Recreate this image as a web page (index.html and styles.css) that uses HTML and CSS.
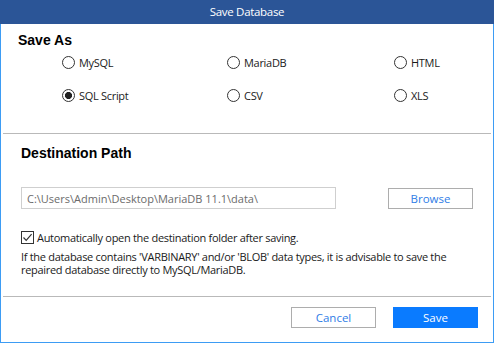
FILE: index.html
```html
<!DOCTYPE html>
<html lang="en">

<head>
    <meta charset="UTF-8">
    <meta name="viewport" content="width=device-width, initial-scale=1.0">
    <title>Save Database</title>
    <link rel="stylesheet" href="styles.css">
</head>

<body>
    <div class="window">
        <div class="titlebar">Save Database</div>
        <div class="content">
            <div class="section">
                <h2 class="heading">Save As</h2>
                <div class="options">
                    <label class="option"><input type="radio" name="format" value="mysql"> MySQL</label>
                    <label class="option"><input type="radio" name="format" value="mariadb"> MariaDB</label>
                    <label class="option"><input type="radio" name="format" value="html"> HTML</label>
                    <label class="option"><input type="radio" name="format" value="sql" checked> SQL Script</label>
                    <label class="option"><input type="radio" name="format" value="csv"> CSV</label>
                    <label class="option"><input type="radio" name="format" value="xls"> XLS</label>
                </div>
            </div>

            <hr class="divider divider-top">

            <div class="section destination">
                <h2 class="heading heading-dest">Destination Path</h2>
                <div class="path-row">
                    <input type="text" class="path" value="C:\Users\Admin\Desktop\MariaDB 11.1\data\" readonly>
                    <button class="btn">Browse</button>
                </div>
                <label class="check-row">
                    <span class="check">
                        <svg width="11" height="11" viewBox="0 0 11 11">
                            <path d="M1.5 5.5 L4.2 8.4 L9.6 2.2" fill="none" stroke="#333" stroke-width="1.2"/>
                        </svg>
                    </span>
                    Automatically open the destination folder after saving.
                </label>
                <p class="note">If the database contains 'VARBINARY' and/or 'BLOB' data types, it is advisable to save the repaired database directly to MySQL/MariaDB.</p>
            </div>

            <hr class="divider divider-bottom">

            <div class="footer">
                <button class="btn">Cancel</button>
                <button class="btn primary">Save</button>
            </div>
        </div>
    </div>
</body>

</html>
```

FILE: styles.css
```css
/* styles.css */

body {
    margin: 0;
    font-family: "Open Sans", "Noto Sans", sans-serif;
    font-size: 11px;
    letter-spacing: -0.3px;
    color: #1a1a1a;
}

.window {
    width: 494px;
    height: 343px;
    display: flex;
    flex-direction: column;
    box-sizing: border-box;
}

.titlebar {
    height: 24px;
    line-height: 24px;
    background-color: #2b5597;
    color: #fff;
    text-align: center;
    font-size: 11.5px;
}

.content {
    flex: 1;
    border: 1px solid #3d9cf4;
    border-top: none;
    display: flex;
    flex-direction: column;
}

.section {
    padding: 8px 0 0 17px;
}

.heading {
    margin: 0;
    font-family: "Liberation Sans", Arial, sans-serif;
    font-size: 14px;
    font-weight: bold;
    line-height: 16px;
    letter-spacing: 0;
    color: #000;
}

.options {
    display: grid;
    grid-template-columns: 165px 167px auto;
    row-gap: 17px;
    margin: 6px 0 0 44px;
}

.option {
    display: flex;
    align-items: center;
    gap: 4px;
    height: 16px;
}

.option input {
    appearance: none;
    -webkit-appearance: none;
    margin: 0;
    width: 13px;
    height: 13px;
    border: 1px solid #333;
    border-radius: 50%;
    box-sizing: border-box;
}

.option input:checked {
    background: radial-gradient(circle, #222 3.3px, transparent 3.8px);
}

.divider {
    border: none;
    border-top: 1px solid #b9b9b9;
    margin: 0 2px;
}

.divider-top {
    margin-top: 30px;
}

.destination {
    padding: 11px 0 0 20px;
}

.path-row {
    display: flex;
    align-items: center;
    margin-top: 26px;
}

.path {
    width: 315px;
    height: 22px;
    box-sizing: border-box;
    border: 1px solid #cfcfcf;
    padding: 0 5px;
    font-family: inherit;
    font-size: 11px;
    letter-spacing: 0;
    color: #6b6b6b;
    outline: none;
}

.btn {
    width: 85px;
    height: 21px;
    padding: 0;
    background-color: #fff;
    border: 1px solid #adadad;
    font-family: inherit;
    font-size: 11.5px;
    color: #2f7de6;
    cursor: pointer;
}

.path-row .btn {
    margin-left: 52px;
}

.btn.primary {
    background-color: #0a7bff;
    border-color: #0a7bff;
    color: #fff;
}

.check-row {
    display: flex;
    align-items: center;
    gap: 3px;
    height: 16px;
    margin-top: 20px;
}

.check {
    width: 13px;
    height: 13px;
    border: 1px solid #333;
    box-sizing: border-box;
    display: flex;
    align-items: center;
    justify-content: center;
}

.note {
    margin: 5px 0 0;
    line-height: 13px;
    width: 440px;
}

.divider-bottom {
    margin-top: 20px;
}

.footer {
    display: flex;
    justify-content: flex-end;
    gap: 17px;
    padding: 10px 15px 0 0;
}
```
